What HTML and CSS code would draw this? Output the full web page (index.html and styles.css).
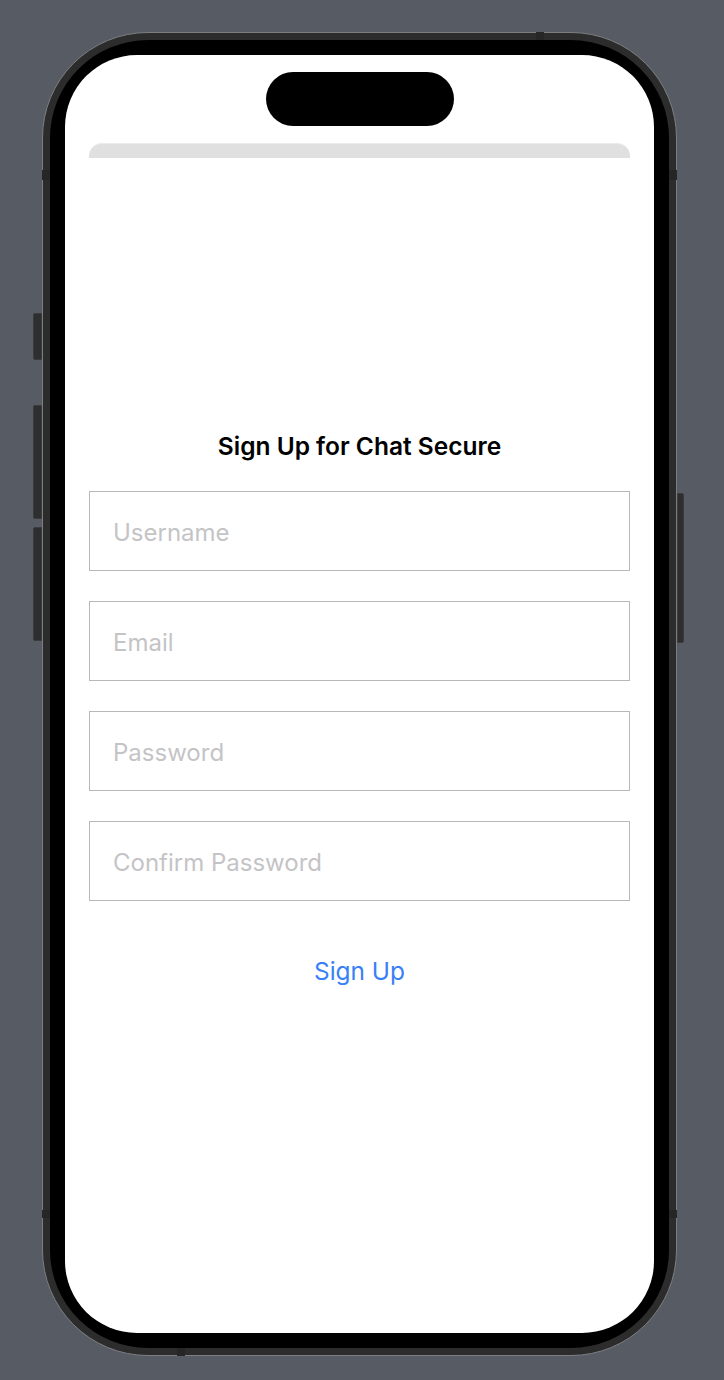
FILE: index.html
```html
<!DOCTYPE html>
<html lang="en">
<head>
<meta charset="utf-8">
<title>Sign Up for Chat Secure</title>
<link rel="stylesheet" href="styles.css">
</head>
<body>
<div class="stage">
  <div class="phone">
    <span class="btn btn-action"></span>
    <span class="btn btn-vol-up"></span>
    <span class="btn btn-vol-down"></span>
    <span class="btn btn-power"></span>
    <span class="band band-top"></span>
    <span class="band band-bottom"></span>
    <span class="band band-lt"></span>
    <span class="band band-rt"></span>
    <span class="band band-lb"></span>
    <span class="band band-rb"></span>
    <div class="bezel">
      <div class="screen">
        <div class="island"></div>
        <div class="sheet-edge"></div>
        <main class="form">
          <h1 class="title">Sign Up for Chat Secure</h1>
          <div class="field"><span class="placeholder">Username</span></div>
          <div class="field"><span class="placeholder">Email</span></div>
          <div class="field"><span class="placeholder">Password</span></div>
          <div class="field"><span class="placeholder">Confirm Password</span></div>
          <div class="action"><span class="link-btn">Sign Up</span></div>
        </main>
      </div>
    </div>
  </div>
</div>
</body>
</html>
```

FILE: styles.css
```css
* { box-sizing: border-box; }

html, body {
  margin: 0;
  padding: 0;
  background: #575b63;
}

body {
  width: 724px;
  height: 1380px;
  overflow: hidden;
  font-family: Inter, "Noto Sans", sans-serif;
}

.stage {
  padding: 32px 0 0 42px;
}

.phone {
  position: relative;
  width: 635px;
  height: 1324px;
  border: 1px solid #7c7e82;
  border-radius: 106px;
  background: #2c2c2c;
  padding: 7px;
}

.bezel {
  width: 100%;
  height: 100%;
  background: #000;
  border-radius: 98px;
  padding: 15px;
}

.screen {
  width: 100%;
  height: 100%;
  background: #fff;
  border-radius: 72px;
  overflow: hidden;
  display: flex;
  flex-direction: column;
  align-items: center;
}

/* side buttons */
.btn {
  position: absolute;
  width: 9px;
  background: #2e2e2e;
  border: 1px solid #3a3b3d;
}
.btn-action { left: -10px; top: 280px; height: 47px; border-radius: 2px 0 0 2px; }
.btn-vol-up { left: -10px; top: 372px; height: 114px; border-radius: 2px 0 0 2px; }
.btn-vol-down { left: -10px; top: 494px; height: 114px; border-radius: 2px 0 0 2px; }
.btn-power { right: -8px; top: 460px; height: 150px; width: 7px; border-radius: 0 2px 2px 0; }

/* antenna bands */
.band {
  position: absolute;
  background: #262626;
}
.band-top { top: -1px; left: 493px; width: 8px; height: 8px; }
.band-bottom { bottom: -1px; left: 134px; width: 8px; height: 8px; }
.band-lt { left: -1px; top: 137px; width: 8px; height: 10px; }
.band-rt { right: -1px; top: 137px; width: 8px; height: 10px; }
.band-lb { left: -1px; top: 1177px; width: 8px; height: 8px; }
.band-rb { right: -1px; top: 1177px; width: 8px; height: 8px; }

.island {
  flex: none;
  margin-top: 17px;
  width: 188px;
  height: 54px;
  border-radius: 27px;
  background: #000;
}

.sheet-edge {
  flex: none;
  margin-top: 17px;
  width: 541px;
  height: 15px;
  background: #e0e0e0;
  border-top: 1px solid #ebebeb;
  border-radius: 13px 13px 0 0;
}

.form {
  width: 541px;
  display: flex;
  flex-direction: column;
  align-items: stretch;
  gap: 30px;
  padding-top: 273px;
}

.title {
  margin: 0;
  text-align: center;
  font-size: 24.5px;
  line-height: 30px;
  font-weight: 600;
  color: #000;
}

.field {
  height: 80px;
  border: 1px solid #b8b8b8;
  display: flex;
  align-items: center;
  padding-left: 23px;
  padding-top: 2px;
}

.placeholder {
  font-size: 24px;
  color: #c4c4c6;
}

.action {
  display: flex;
  justify-content: center;
  margin-top: 26px;
}

.link-btn {
  font-size: 24.4px;
  line-height: 28px;
  color: #3880f6;
}
```
